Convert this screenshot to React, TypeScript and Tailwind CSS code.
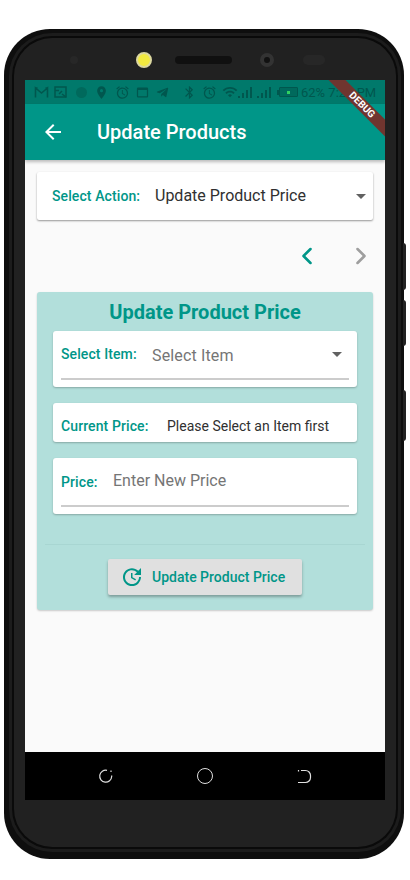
import { ChevronLeft, ChevronRight } from "lucide-react";
import { FaTelegramPlane } from "react-icons/fa";
import {
  MdAccessAlarm,
  MdArrowBack,
  MdBluetooth,
  MdLocationOn,
  MdUpdate,
  MdWifi,
  MdWebAsset,
} from "react-icons/md";

function Caret({ color = "#616161" }: { color?: string }) {
  return (
    <svg width="10" height="5" viewBox="0 0 10 5" className="shrink-0">
      <path d="M0 0h10L5 5z" fill={color} />
    </svg>
  );
}

function Signal() {
  return (
    <svg width="16" height="13" viewBox="0 0 16 13" className="shrink-0" fill="#00574e">
      <rect x="0" y="10" width="2" height="2" />
      <rect x="4" y="7" width="2" height="5" />
      <rect x="8" y="4" width="2" height="8" />
      <rect x="12" y="1" width="2" height="11" />
    </svg>
  );
}

function StatusBar() {
  return (
    <div className="flex h-6 shrink-0 items-center bg-[#00796b] pl-[9px] text-[#00574e]">
      <svg width="15" height="13" viewBox="0 0 15 13" fill="none" stroke="#00574e" strokeWidth="1.6" className="shrink-0">
        <path d="M1.5 11.5V2l6 5 6-5v9.5M1.500 2h2M13.500 2h-2" />
      </svg>
      <svg width="13" height="12" viewBox="0 0 13 12" fill="none" stroke="#00574e" strokeWidth="1.5" className="ml-[5px] shrink-0">
        <rect x="1" y="1" width="11" height="10" />
        <path d="M1 4.500h4M8 8l4 3M5 8l3-3" />
      </svg>
      <div className="ml-[9px] h-[11px] w-[11px] shrink-0 rounded-full bg-[#00695c]" />
      <MdLocationOn size={15} className="ml-[7px] shrink-0" />
      <MdAccessAlarm size={15} className="ml-[6px] shrink-0" />
      <MdWebAsset size={15} className="ml-[5px] shrink-0" />
      <FaTelegramPlane size={13} className="ml-[6px] shrink-0" />
      <MdBluetooth size={15} className="ml-[13px] shrink-0" />
      <MdAccessAlarm size={15} className="ml-[5px] shrink-0" />
      <MdWifi size={16} className="ml-[5px] shrink-0" />
      <Signal />
      <div className="ml-[3px]">
        <Signal />
      </div>
      <div className="ml-[4px] flex shrink-0 items-center">
        <div className="h-[5px] w-[2px] bg-[#00574e]" />
        <div className="flex h-[10px] w-[19px] items-center justify-center rounded-[1px] border border-[#00574e] bg-[#00695c]">
          <div className="h-[3px] w-[3px] bg-[#30d060]" />
        </div>
      </div>
      <span className="ml-[3px] whitespace-nowrap font-['Roboto',sans-serif] text-[13px] leading-none">62% 7:29 PM</span>
    </div>
  );
}

function FieldCard({ children, className }: { children: React.ReactNode; className: string }) {
  return <div className={`rounded-[3px] bg-white px-2 shadow-[0_1px_2px_rgba(0,0,0,0.25)] ${className}`}>{children}</div>;
}

export default function App() {
  return (
    <div className="relative h-[880px] w-[410px] overflow-hidden bg-white pl-1 pt-[29px] font-['Roboto',sans-serif]">
      {/* Side buttons */}
      <div className="absolute left-[403px] top-[243px] h-[47px] w-[3px] rounded-r-sm bg-[#222]" />
      <div className="absolute left-[403px] top-[300px] h-[46px] w-[3px] rounded-r-sm bg-[#222]" />
      <div className="absolute left-[403px] top-[390px] h-[51px] w-[3px] rounded-r-sm bg-[#222]" />

      {/* Phone body */}
      <div className="h-[830px] w-[400px] rounded-[46px] bg-[#0e0e0e] pl-[10px] pt-[9px]">
        <div className="flex h-[809px] w-[382px] flex-col items-center rounded-[38px] bg-[#212121] pt-px shadow-[0_0_0_2px_#0a0a0a,0_0_0_5px_#1c1c1c]">
          {/* Earpiece row */}
          <div className="flex h-[41px] w-full shrink-0 items-center pl-[56px]">
            <div className="h-2 w-2 rounded-full bg-[#272727]" />
            <div className="ml-[58px] h-4 w-4 rounded-full border-2 border-[#dcd8a0] bg-[#f2ea40]" />
            <div className="ml-[23px] h-2 w-[57px] rounded-full bg-[#101010]" />
            <div className="ml-7 flex h-[14px] w-[14px] items-center justify-center rounded-full bg-[#333]">
              <div className="h-[6px] w-[6px] rounded-full bg-[#111]" />
            </div>
            <div className="ml-[29px] h-[10px] w-[22px] rounded-full bg-[#272727]" />
          </div>

          {/* Screen */}
          <div className="flex h-[720px] w-[360px] shrink-0 flex-col overflow-hidden">
            <div className="relative flex h-20 shrink-0 flex-col">
              <StatusBar />
              <div className="flex h-14 items-center bg-[#009688] pl-4 text-white shadow-[0_2px_3px_rgba(0,0,0,0.25)]">
                <MdArrowBack size={24} />
                <span className="ml-8 text-[20px] font-medium">Update Products</span>
              </div>
              <div className="absolute -right-[22px] top-[19px] flex h-[12px] w-[90px] rotate-45 items-center justify-center bg-[#70352f] text-[10px] font-bold leading-none text-white">
                DEBUG
              </div>
            </div>

            <div className="flex flex-1 flex-col bg-[#fafafa] px-3 pt-3">
              <div className="flex h-12 shrink-0 items-center rounded-[2px] bg-white pl-[15px] pr-[7px] shadow-[0_1px_2px_rgba(0,0,0,0.4)]">
                <span className="w-[103px] text-[14px] font-medium tracking-[0.1px] text-[#009688]">Select Action:</span>
                <span className="flex-1 text-[16px] text-[#303030]">Update Product Price</span>
                <Caret />
              </div>

              <div className="flex h-[72px] shrink-0 items-center justify-end text-[#9e9e9e]">
                <ChevronLeft size={28} strokeWidth={2.2} className="mr-[26px] text-[#009688]" />
                <ChevronRight size={28} strokeWidth={2.2} className="mr-[-2px]" />
              </div>

              <div className="flex h-[318px] shrink-0 flex-col rounded-[3px] bg-[#b2dfdb] px-4 shadow-[0_1px_2px_rgba(0,0,0,0.2)]">
                <h1 className="h-[39px] shrink-0 pt-[6px] text-center text-[20px] font-bold leading-[28px] text-[#009688]">
                  Update Product Price
                </h1>

                <FieldCard className="flex h-14 shrink-0 flex-col">
                  <div className="flex h-[47px] items-center">
                    <span className="w-[91px] text-[14px] font-medium tracking-[0.1px] text-[#009688]">Select Item:</span>
                    <span className="flex-1 pt-[2px] text-[16px] tracking-[0.15px] text-[#757575]">Select Item</span>
                    <Caret />
                    <div className="w-[7px]" />
                  </div>
                  <div className="h-[2px] bg-[#cccccc]" />
                </FieldCard>

                <FieldCard className="mt-4 flex h-[39px] shrink-0 items-center pt-2">
                  <span className="w-[106px] text-[14px] font-medium tracking-[0.1px] text-[#009688]">Current Price:</span>
                  <span className="text-[14px] text-[#303030]">Please Select an Item first</span>
                </FieldCard>

                <FieldCard className="mt-4 flex h-14 shrink-0 flex-col">
                  <div className="flex h-[47px] items-center">
                    <span className="w-[52px] pt-[2px] text-[14px] font-medium tracking-[0.1px] text-[#009688]">Price:</span>
                    <span className="pb-[2px] text-[16px] text-[#757575]">Enter New Price</span>
                  </div>
                  <div className="h-[2px] bg-[#cccccc]" />
                </FieldCard>

                <div className="-mx-2 mt-[30px] h-px shrink-0 bg-[#a8d6d2]" />

                <div className="mt-[14px] flex justify-center">
                  <button
                    type="button"
                    className="flex h-9 w-[194px] items-center rounded-[2px] bg-[#e0e0e0] pl-3 text-[14px] font-medium text-[#009688] shadow-[0_2px_3px_rgba(0,0,0,0.3)]"
                  >
                    <MdUpdate size={24} className="mr-2" />
                    Update Product Price
                  </button>
                </div>
              </div>
            </div>

            {/* Android nav bar */}
            <div className="flex h-12 shrink-0 items-center bg-black pl-[73px]">
              <svg width="15" height="15" viewBox="0 0 15 15" fill="none" stroke="#e0e0e0" strokeWidth="1.2">
                <path d="M9 1.300A6 6 0 1 0 13.700 7.500V6.500M13 1.500V3" />
              </svg>
              <div className="ml-[84px] h-4 w-4 rounded-full border border-[#e0e0e0]" />
              <svg width="15" height="15" viewBox="0 0 15 15" fill="none" stroke="#e0e0e0" strokeWidth="1.2" className="ml-[84px]">
                <path d="M4 1.500h4.500a5 5 0 0 1 5 5v2a5 5 0 0 1-5 5H1M1.500 1v1.500" />
              </svg>
            </div>
          </div>
        </div>
      </div>
    </div>
  );
}
